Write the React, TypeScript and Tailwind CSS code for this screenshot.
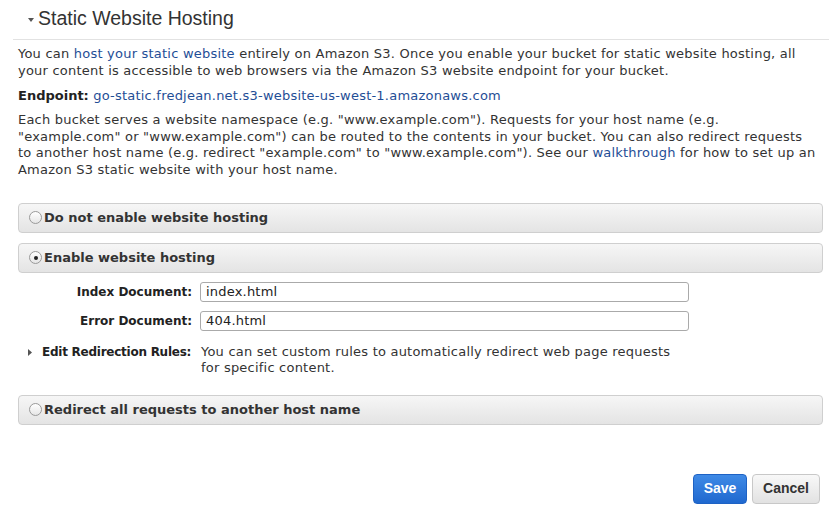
import type { ReactNode } from "react"

function Radio({ checked }: { checked?: boolean }) {
  return (
    <span className="flex h-[13px] w-[13px] shrink-0 items-center justify-center rounded-full border border-[#9a9a9a] bg-gradient-to-b from-white to-[#e6e6e6]">
      {checked && <span className="h-[4px] w-[4px] rounded-full bg-[#222]" />}
    </span>
  )
}

function OptionBar({ label, checked }: { label: string; checked?: boolean }) {
  return (
    <div className="flex h-[30px] items-center gap-[2px] rounded-[4px] border border-[#cfcfcf] bg-gradient-to-b from-[#f6f6f6] to-[#e4e4e4] pl-[10px]">
      <Radio checked={checked} />
      <span className="font-bold text-[13px] text-[#333]">{label}</span>
    </div>
  )
}

function Field({ label, value }: { label: string; value: string }) {
  return (
    <div className="flex items-center">
      <div className="w-[182px] whitespace-nowrap pr-[8px] text-right text-[12px] font-bold text-[#222]">{label}</div>
      <div className="flex h-[20px] w-[489px] items-center rounded-[3px] border border-[#aaa] bg-white px-[5px] text-[13px] tracking-[0.2px] text-[#222]">
        {value}
      </div>
    </div>
  )
}

function Link({ children }: { children: ReactNode }) {
  return <span className="text-[#1f4e96]">{children}</span>
}

export default function App() {
  return (
    <div className="h-[509px] w-[829px] bg-white font-['DejaVu_Sans',Verdana,sans-serif] text-[#333]">
      <div className="flex h-[39px] items-center pl-[28px] pb-[1px]">
        <svg width="6" height="4" viewBox="0 0 6 4" className="mr-[4px] mt-[1px] shrink-0">
          <path d="M0 0 L6 0 L3 4 Z" fill="#555" />
        </svg>
        <span className="font-['Liberation_Sans',Arial,sans-serif] text-[19.5px] text-[#333]">Static Website Hosting</span>
      </div>
      <div className="ml-[13px] h-px bg-[#e2e2e2]" />

      <div className="whitespace-nowrap px-[18px] pt-[5px] text-[13px] leading-[17px] tracking-[0.22px]">
        <p>
          You can <Link>host your static website</Link> entirely on Amazon S3. Once you enable your bucket for static website hosting, all
          <br />
          your content is accessible to web browsers via the Amazon S3 website endpoint for your bucket.
        </p>
        <p className="mt-[8px]">
          <span className="font-bold tracking-normal text-[#222]">Endpoint:</span>{" "}
          <Link>go-static.fredjean.net.s3-website-us-west-1.amazonaws.com</Link>
        </p>
        <p className="mt-[8px] leading-[16.7px]">
          Each bucket serves a website namespace (e.g. "www.example.com"). Requests for your host name (e.g.
          <br />
          "example.com" or "www.example.com") can be routed to the contents in your bucket. You can also redirect requests
          <br />
          to another host name (e.g. redirect "example.com" to "www.example.com"). See our <Link>walkthrough</Link> for how to set up an
          <br />
          Amazon S3 static website with your host name.
        </p>
      </div>

      <div className="ml-[18px] mr-[6px] mt-[24px] flex flex-col">
        <OptionBar label="Do not enable website hosting" />
        <div className="mt-[10px]">
          <OptionBar label="Enable website hosting" checked />
        </div>
        <div className="mt-[9px] flex flex-col gap-[9px]">
          <Field label="Index Document:" value="index.html" />
          <Field label="Error Document:" value="404.html" />
        </div>
        <div className="mt-[13px] flex text-[13px] leading-[16px]">
          <div className="flex w-[182px] shrink-0 items-start whitespace-nowrap pl-[10px]">
            <svg width="4" height="7" viewBox="0 0 4 7" className="mr-[10px] mt-[5px] shrink-0">
              <path d="M0 0 L4 3.5 L0 7 Z" fill="#555" />
            </svg>
            <span className="shrink-0 text-[12px] font-bold tracking-[-0.25px] text-[#222]">Edit Redirection Rules:</span>
          </div>
          <div className="whitespace-nowrap pl-[1px] tracking-[0.22px]">
            You can set custom rules to automatically redirect web page requests
            <br />
            for specific content.
          </div>
        </div>
        <div className="mt-[19px]">
          <OptionBar label="Redirect all requests to another host name" />
        </div>
      </div>

      <div className="mr-[9px] mt-[49px] flex justify-end gap-[5px] font-['Liberation_Sans',Arial,sans-serif] text-[14px] font-bold">
        <button className="h-[30px] w-[54px] rounded-[4px] border border-[#1e62c4] bg-gradient-to-b from-[#3f8ae6] to-[#1f68cf] text-white">
          Save
        </button>
        <button className="h-[30px] w-[68px] rounded-[4px] border border-[#c8c8c8] bg-gradient-to-b from-[#f8f8f8] to-[#e2e2e2] text-[#333]">
          Cancel
        </button>
      </div>
    </div>
  )
}
